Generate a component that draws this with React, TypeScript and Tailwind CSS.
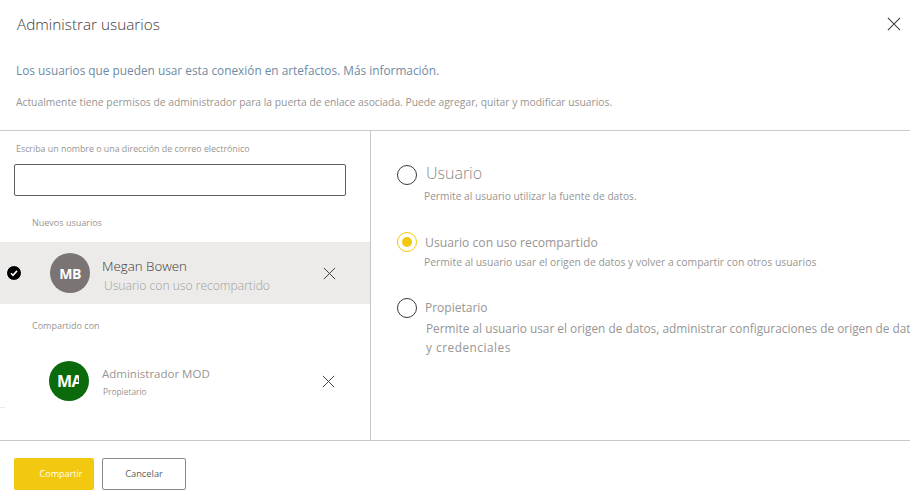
function CloseIcon({ size = 15 }: { size?: number }) {
  return (
    <svg width={size} height={size} viewBox="0 0 15 15" fill="none" stroke="#3b3a39" strokeWidth="1.1">
      <path d="M1 1l13 13M14 1L1 14" />
    </svg>
  );
}

function Radio({ checked = false }: { checked?: boolean }) {
  return (
    <span
      className={`flex h-5 w-5 shrink-0 items-center justify-center rounded-full border bg-white ${
        checked ? "border-[#f2c811]" : "border-[#3b3a39]"
      }`}
    >
      {checked && <span className="h-2.5 w-2.5 rounded-full bg-[#f2c811]" />}
    </span>
  );
}

export default function App() {
  return (
    <div className="flex h-[499px] w-[910px] flex-col overflow-hidden bg-white font-['Open_Sans',sans-serif] text-[#605e5c]">
      {/* Header */}
      <header className="relative h-[131px] shrink-0 border-b border-[#c8c8c8]">
        <h1 className="pl-[17px] pt-[13px] text-[15.3px] font-light leading-[22px] text-[#3b3a39]">
          Administrar usuarios
        </h1>
        <button className="absolute right-[9px] top-[17px]">
          <CloseIcon size={14} />
        </button>
        <p className="pl-4 pt-[25px] text-[11.83px] leading-[20px] text-[#6f8ba3]">
          Los usuarios que pueden usar esta conexión en artefactos. Más información.
        </p>
        <p className="pl-4 pt-[14px] text-[10.3px] leading-[16px] text-[#979593]">
          Actualmente tiene permisos de administrador para la puerta de enlace asociada. Puede agregar, quitar y modificar usuarios.
        </p>
      </header>

      <div className="flex h-[310px] shrink-0 border-b border-[#c8c8c8]">
        {/* Left pane */}
        <div className="w-[371px] shrink-0 border-r border-[#c8c8c8]">
          <p className="pl-4 pt-[11px] text-[8.85px] leading-[14px] text-[#979593]">
            Escriba un nombre o una dirección de correo electrónico
          </p>
          <div className="ml-[14px] mt-[8px] h-[32px] w-[332px] rounded-[2px] border border-[#605e5c]" />
          <p className="pl-8 pt-[20px] text-[9px] leading-[14px] text-[#979593]">Nuevos usuarios</p>

          <div className="mt-[12px] flex h-[62px] items-center bg-[#ecebe9]">
            <span className="ml-[6px] flex h-4 w-4 items-center justify-center rounded-full border border-white bg-black">
              <svg width="10" height="10" viewBox="0 0 10 10" fill="none" stroke="white" strokeWidth="1.6">
                <path d="M2 5.3l2 2 4-4.4" />
              </svg>
            </span>
            <span className="ml-[28px] flex h-10 w-10 items-center justify-center rounded-full bg-[#7a7574] text-[14px] font-bold tracking-[-0.5px] text-white">
              MB
            </span>
            <div className="ml-3 w-[221px] pt-[6px]">
              <p className="text-[13.3px] font-light leading-[17px] text-[#3b3a39]">Megan Bowen</p>
              <p className="mt-[2px] pl-[2px] text-[12.1px] font-light leading-[17px] text-[#a19f9d]">Usuario con uso recompartido</p>
            </div>
            <CloseIcon size={13} />
          </div>

          <p className="pl-8 pt-[15px] text-[9px] leading-[14px] text-[#979593]">Compartido con</p>

          <div className="mt-[28px] flex h-10 items-center">
            <span className="ml-[49px] flex h-10 w-10 items-center overflow-hidden rounded-full bg-[#0b6a0b] pl-2 text-[16px] font-bold tracking-[-0.5px] text-white">
              <span className="block w-[22px] overflow-hidden">MA</span>
            </span>
            <div className="ml-[13px] w-[220px]">
              <p className="text-[11.5px] leading-[17px] text-[#979593]">Administrador MOD</p>
              <p className="pt-[3px] pl-[1px] text-[8.4px] leading-[13px] text-[#979593]">Propietario</p>
            </div>
            <CloseIcon size={13} />
          </div>
          <div className="mt-[6px] h-px w-[5px] bg-[#edebe9]" />
        </div>

        {/* Right pane */}
        <div className="min-w-0 flex-1 overflow-hidden pl-[26px] pt-[31px]">
          <div className="flex h-[26px] items-center gap-[9px]">
            <Radio />
            <span className="-mt-1 text-[16px] font-light text-[#8a8886]">Usuario</span>
          </div>
          <p className="pl-[27px] text-[10.2px] leading-[16px] text-[#979593]">
            Permite al usuario utilizar la fuente de datos.
          </p>
          <div className="mt-[25px] flex h-[26px] items-center gap-2">
            <Radio checked />
            <span className="mt-[2px] text-[12.2px] text-[#979593]">Usuario con uso recompartido</span>
          </div>
          <p className="-mt-px pl-[27px] text-[10.37px] leading-[16px] text-[#979593]">
            Permite al usuario usar el origen de datos y volver a compartir con otros usuarios
          </p>
          <div className="mt-[25px] flex h-[26px] items-center gap-2">
            <Radio />
            <span className="text-[12px] text-[#979593]">Propietario</span>
          </div>
          <p className="-mt-[2px] whitespace-nowrap pl-[29px] text-[11.85px] leading-[19px] text-[#979593]">
            Permite al usuario usar el origen de datos, administrar configuraciones de origen de datos
            <br />
            <span className="tracking-[0.5px]">y credenciales</span>
          </p>
        </div>
      </div>

      {/* Footer */}
      <footer className="flex gap-2 pl-[14px] pt-[17px]">
        <button className="h-8 w-20 rounded-[2px] bg-[#f2c811] pl-[14px] text-[9px] text-white">Compartir</button>
        <button className="h-8 w-[84px] rounded-[2px] border border-[#8a8886] text-[9.3px] text-[#605e5c]">Cancelar</button>
      </footer>
    </div>
  );
}
